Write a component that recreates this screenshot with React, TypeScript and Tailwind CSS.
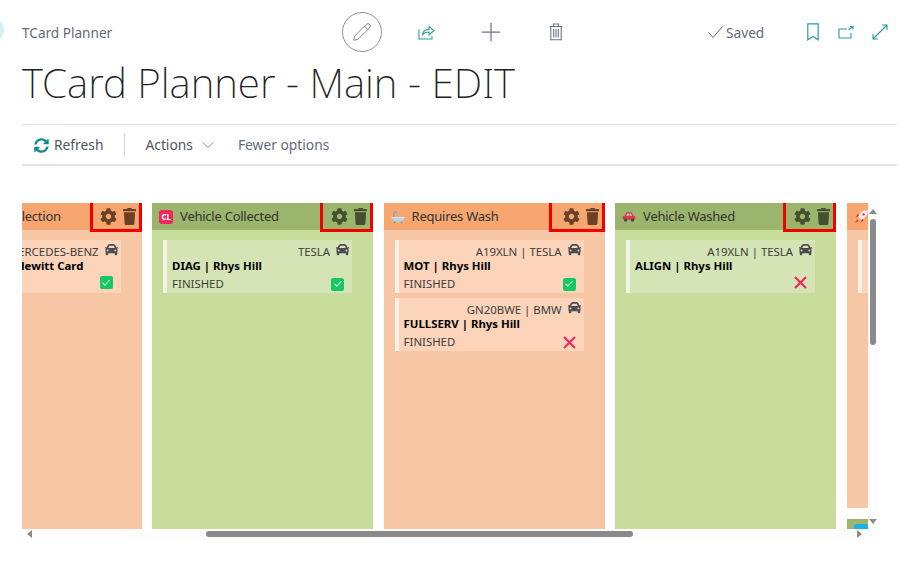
import { Pencil, Plus, Check, ChevronDown } from 'lucide-react';
import { FaCar, FaCog, FaTrash, FaSyncAlt } from 'react-icons/fa';

type CardData = {
  top: string;
  title: string;
  status?: string;
  done: boolean;
};

type ColumnData = {
  name: string;
  tone: 'orange' | 'green';
  icon: React.ReactNode;
  boxWidth: string;
  cards: CardData[];
};

function BathIcon() {
  return (
    <svg width="15" height="14" viewBox="0 0 15 14">
      <path d="M3 7V3a1.600 1.600 0 0 1 3.200 0" fill="none" stroke="#8f98a3" strokeWidth="1.200" />
      <circle cx="6.600" cy="4.200" r="1.200" fill="#7fc4e8" />
      <rect x="0.500" y="7" width="14" height="1.600" rx="0.800" fill="#dfe6ec" />
      <path d="M1.500 8.600h12c0 2.400-1.400 3.600-3 3.600h-6c-1.600 0-3-1.200-3-3.600z" fill="#a9d8ee" />
      <rect x="3" y="12" width="1.600" height="1.600" fill="#7d8893" />
      <rect x="10.400" y="12" width="1.600" height="1.600" fill="#7d8893" />
    </svg>
  );
}

function RedCarIcon() {
  return (
    <svg width="15" height="12" viewBox="0 0 15 12">
      <path d="M3 5l1.300-3.200C4.500 1.300 5 1 5.500 1h4.200c.5 0 1 .3 1.200.8L12.200 5z" fill="#d8323c" />
      <path d="M4.600 4.800l.9-2.600h1.800v2.600zM8.200 4.800V2.200h1.500l1 2.600z" fill="#a6def5" />
      <rect x="0.800" y="4.600" width="13.400" height="4.400" rx="1.400" fill="#e5383f" />
      <circle cx="3.800" cy="9.200" r="1.800" fill="#3b4a54" />
      <circle cx="11.200" cy="9.200" r="1.800" fill="#3b4a54" />
    </svg>
  );
}

function RocketIcon() {
  return (
    <svg width="15" height="15" viewBox="0 0 15 15">
      <path d="M13.800 1.200c-3.500-.3-6.300 1.200-8.300 4l-1.400 2.400 3.300 3.300 2.400-1.400c2.800-2 4.300-4.800 4-8.300z" fill="#f3eef0" />
      <path d="M4.100 7.600 1.300 8.400l2-2.800 2.200-.2zM7.400 10.900l-.8 2.800 2.800-2-.2-2.200z" fill="#e8344e" />
      <circle cx="9.600" cy="5.400" r="1.200" fill="#e8344e" />
      <path d="M3.200 10.200 1 14l3.800-2.200z" fill="#e8344e" />
    </svg>
  );
}

function CollectedBadge() {
  return (
    <span className="flex h-[14px] w-[14px] items-center justify-center rounded-[3px] bg-[#f0285f] text-[8px] font-bold leading-none text-white">
      CL
    </span>
  );
}

function DoneCheck() {
  return (
    <span className="flex h-[13px] w-[13px] items-center justify-center rounded-[2px] bg-[#14c964]">
      <Check size={10} strokeWidth={2.5} color="#e8f7e8" />
    </span>
  );
}

function RedCross() {
  return (
    <svg width="13" height="13" viewBox="0 0 13 13">
      <path d="M1 1l11 11M12 1L1 12" stroke="#ee2a5f" strokeWidth="2.200" />
    </svg>
  );
}

function Ticket({ card, tone }: { card: CardData; tone: 'orange' | 'green' }) {
  const bg = tone === 'orange' ? 'bg-[#fbd4ba]' : 'bg-[#d5e4b4]';
  const bar = tone === 'orange' ? 'border-[#fff2e9]' : 'border-[#f1f6e6]';
  return (
    <div className={`${bg} ${bar} h-[53px] w-[189px] border-l-4 pl-[5px] pr-[3px] text-[11.400px] leading-[16px] text-[#3c3c3c]`}>
      <div className="flex h-[19px] items-center justify-end">
        <span className="truncate pt-[5px]">{card.top}</span>
        <FaCar preserveAspectRatio="none" className="ml-[6px] h-[15px] w-[13px] shrink-0 text-[#4b4b55]" />
      </div>
      <div className="h-[17px] font-bold leading-[13px] text-black">{card.title}</div>
      <div className="flex items-center justify-between pr-[5px]">
        <span>{card.status}</span>
        {card.done ? <DoneCheck /> : <RedCross />}
      </div>
    </div>
  );
}

function Column({ data }: { data: ColumnData }) {
  const head = data.tone === 'orange' ? 'bg-[#f7a66f]' : 'bg-[#9bb56d]';
  const body = data.tone === 'orange' ? 'bg-[#f7c6a5]' : 'bg-[#c8dc9c]';
  const iconTone = data.tone === 'orange' ? 'text-[#6a4128]' : 'text-[#46502f]';
  return (
    <div className={`${body} flex h-[326px] w-[221px] shrink-0 flex-col`}>
      <div className={`${head} relative flex h-[27px] items-center gap-[7px] pl-[7px] text-[13px] tracking-[-0.25px] text-[#33332f]`}>
        <span className="flex w-[14px] justify-center">{data.icon}</span>
        <span>{data.name}</span>
        <div className={`${data.boxWidth} ${iconTone} absolute -top-[3px] right-0 flex h-[32px] items-center justify-end gap-[6px] border-[3px] border-[#f00000] pr-[3px]`}>
          <FaCog size={17} />
          <FaTrash preserveAspectRatio="none" className="h-[17px] w-[13px]" />
        </div>
      </div>
      <div className="flex flex-col gap-[5px] pl-[11px] pt-[10px]">
        {data.cards.map((card) => (
          <Ticket key={card.top + card.title} card={card} tone={data.tone} />
        ))}
      </div>
    </div>
  );
}

const columns: ColumnData[] = [
  {
    name: 'Awaiting Collection',
    tone: 'orange',
    icon: <CollectedBadge />,
    boxWidth: 'w-[52px]',
    cards: [{ top: 'MERCEDES-BENZ', title: 'REPAIR | Lee Hewitt Card', done: true }],
  },
  {
    name: 'Vehicle Collected',
    tone: 'green',
    icon: <CollectedBadge />,
    boxWidth: 'w-[53px]',
    cards: [{ top: 'TESLA', title: 'DIAG | Rhys Hill', status: 'FINISHED', done: true }],
  },
  {
    name: 'Requires Wash',
    tone: 'orange',
    icon: <BathIcon />,
    boxWidth: 'w-[56px]',
    cards: [
      { top: 'A19XLN | TESLA', title: 'MOT | Rhys Hill', status: 'FINISHED', done: true },
      { top: 'GN20BWE | BMW', title: 'FULLSERV | Rhys Hill', status: 'FINISHED', done: false },
    ],
  },
  {
    name: 'Vehicle Washed',
    tone: 'green',
    icon: <RedCarIcon />,
    boxWidth: 'w-[53px]',
    cards: [{ top: 'A19XLN | TESLA', title: 'ALIGN | Rhys Hill', done: false }],
  },
];

export default function App() {
  return (
    <div className="relative h-[561px] w-[900px] overflow-hidden bg-white font-['Noto_Sans',sans-serif]">
      <div className="absolute -left-[20px] top-[18px] h-[24px] w-[24px] rounded-full bg-[#d5f0f5]" />

      {/* top bar */}
      <div className="flex h-[60px] items-center pl-[22px] pt-[4px] text-[#5f6b7a]">
        <span className="w-[320px] pt-[2px] text-[13.600px]">TCard Planner</span>
        <span className="flex h-[40px] w-[40px] items-center justify-center rounded-full border border-[#8a939e]">
          <Pencil size={20} strokeWidth={1} color="#5f6b7a" />
        </span>
        <span className="ml-[35px] flex w-[18px] justify-center">
          <svg width="17" height="16" viewBox="0 0 17 16" fill="none" stroke="#2e9aa4" strokeWidth="1.100">
            <path d="M1 5.500v9.500h13v-3" />
            <path d="M4.500 11c.3-3.500 3-5.600 6.500-5.600V2.500l5 4.200-5 4.200V8c-2.700 0-5 .8-6.500 3z" />
          </svg>
        </span>
        <span className="ml-[41px] flex w-[30px] justify-center">
          <Plus size={30} strokeWidth={1} color="#6b7684" />
        </span>
        <span className="ml-[40px] flex w-[20px] justify-center">
          <svg width="14" height="18" viewBox="0 0 14 18" fill="none" stroke="#6b7684" strokeWidth="1.100">
            <path d="M0.500 3.500h13M4.500 3.500V1h5v2.500M1.800 3.500v13.300h10.400V3.500" />
            <path d="M4.700 6v8.500M7 6v8.500M9.300 6v8.500" />
          </svg>
        </span>
        <span className="ml-[142px] flex w-[61px] items-center">
          <svg width="15" height="12" viewBox="0 0 15 12" fill="none" stroke="#5f6b7a" strokeWidth="1">
            <path d="M0.500 6.500l4.500 5L14.500 0.500" />
          </svg>
          <span className="ml-[3px] pt-[2px] text-[13.700px]">Saved</span>
        </span>
        <span className="ml-[36px] flex w-[16px] justify-center">
          <svg width="12" height="18" viewBox="0 0 12 18" fill="none" stroke="#2e9aa4" strokeWidth="1.200">
            <path d="M0.800 0.800h10.400v16L6 13.500 0.800 16.800z" />
          </svg>
        </span>
        <span className="ml-[16px] flex w-[18px] justify-center">
          <svg width="16" height="13" viewBox="0 0 16 13" fill="none" stroke="#2e9aa4" strokeWidth="1.100">
            <path d="M9 3H1v9h12V7" />
            <path d="M10.500 3.500 15 0.500M12 0.500h3v3" />
          </svg>
        </span>
        <span className="ml-[16px] flex w-[18px] justify-center">
          <svg width="16" height="16" viewBox="0 0 16 16" fill="none" stroke="#2e9aa4" strokeWidth="1.100">
            <path d="M1 15 15 1M10 1h5v5M1 10v5h5" />
          </svg>
        </span>
      </div>

      {/* title */}
      <h1 className="ml-[22px] h-[64px] text-[40.500px] font-extralight leading-[46px] text-[#212121]">
        TCard Planner - Main - EDIT
      </h1>

      {/* action bar */}
      <div className="ml-[22px] mr-[3px] flex h-[42px] items-center border-y border-b-2 border-y-[#e3e3e3] pt-[1px] text-[13.800px] text-[#5f6b7a]">
        <FaSyncAlt className="ml-[12px] text-[#128a93]" size={15} />
        <span className="ml-[5px] text-[#4d5763]">Refresh</span>
        <span className="ml-[21px] h-[24px] w-[1px] bg-[#d5d8db]" />
        <span className="ml-[20px] text-[#4d5763]">Actions</span>
        <ChevronDown className="ml-[5px]" size={20} strokeWidth={0.9} />
        <span className="ml-[20px]">Fewer options</span>
      </div>

      {/* board */}
      <div className="ml-[22px] mt-[37px] grid w-[856px] grid-cols-[846px_10px] grid-rows-[326px_10px] bg-[#fdfdfd]">
        <div className="overflow-hidden bg-white">
          <div className="-ml-[101.400px] flex gap-[10.500px]">
            {columns.map((col) => (
              <Column key={col.name} data={col} />
            ))}
            <div className="flex w-[221px] shrink-0 flex-col gap-[11px]">
              <div className="flex h-[305px] flex-col bg-[#f7c6a5]">
                <div className="flex h-[27px] items-center bg-[#f7a66f] pl-[7px]">
                  <RocketIcon />
                </div>
                <div className="ml-[11px] mt-[10px] h-[53px] border-l-4 border-[#fff2e9] bg-[#fbd4ba]" />
              </div>
              <div className="flex h-[10px] items-end bg-[#9bb56d] pl-[7px]">
                <span className="h-[5px] w-[14px] rounded-t-[3px] bg-[#19b0ec]" />
              </div>
            </div>
          </div>
        </div>

        {/* vertical scrollbar */}
        <div className="flex flex-col items-center justify-between pb-[5px] pt-[6px]">
          <div className="flex flex-col items-center">
            <span className="h-0 w-0 border-x-[4px] border-b-[5px] border-x-transparent border-b-[#8a8a8a]" />
            <span className="mt-[5px] h-[126px] w-[6px] rounded-[3px] bg-[#8a8a8a]" />
          </div>
          <span className="h-0 w-0 border-x-[4px] border-t-[5px] border-x-transparent border-t-[#8a8a8a]" />
        </div>

        {/* horizontal scrollbar */}
        <div className="flex items-center px-[5px]">
          <span className="h-0 w-0 border-y-[4px] border-r-[5px] border-y-transparent border-r-[#8a8a8a]" />
          <span className="ml-[174px] h-[6px] w-[427px] rounded-[3px] bg-[#8a8a8a]" />
          <span className="ml-auto mr-[1px] h-0 w-0 border-y-[4px] border-l-[5px] border-y-transparent border-l-[#8a8a8a]" />
        </div>
        <div />
      </div>
    </div>
  );
}
